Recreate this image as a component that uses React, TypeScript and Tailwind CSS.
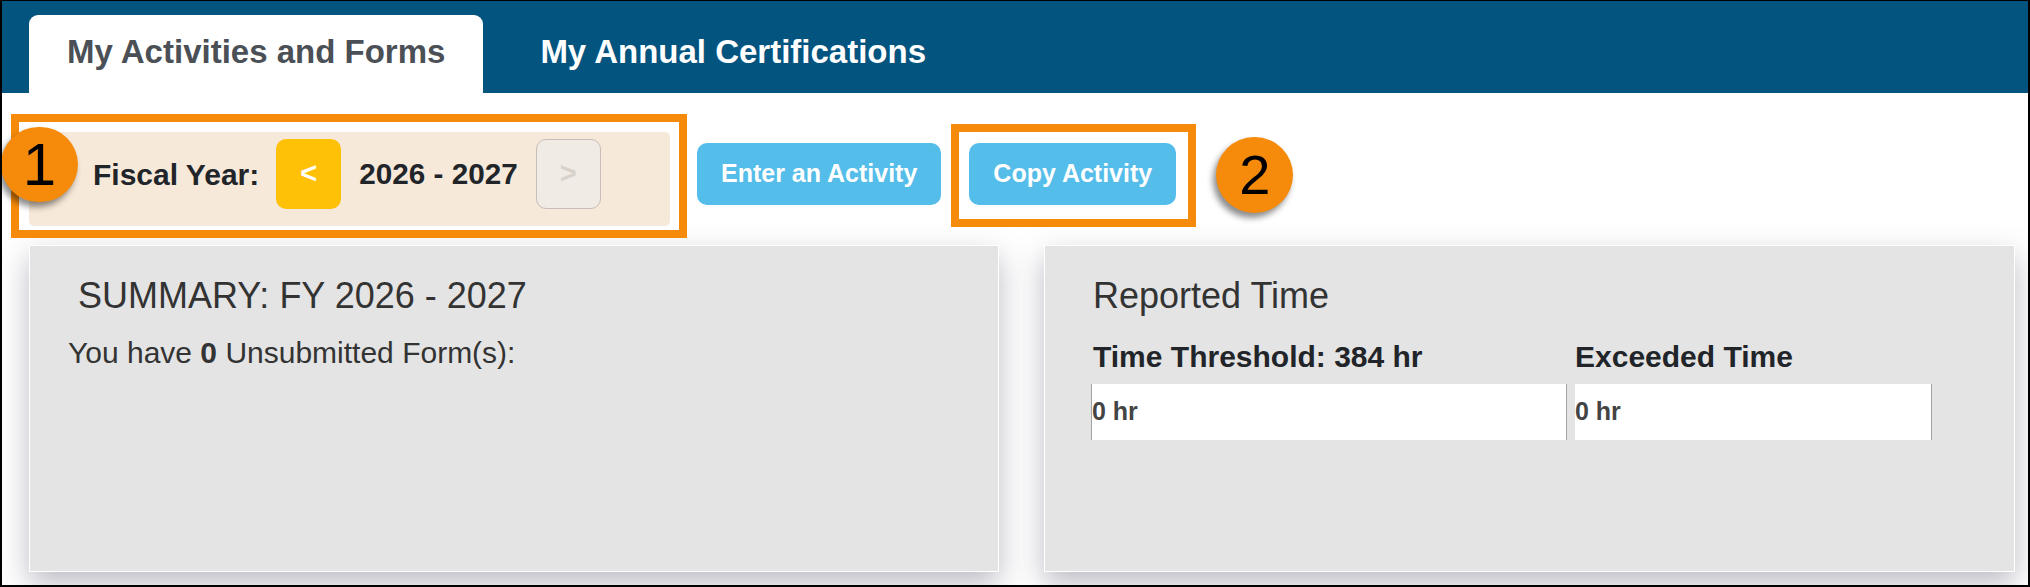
export default function App() {
  return (
    <div className="w-[2030px] h-[587px] overflow-hidden border-2 border-t border-black bg-white font-['Liberation_Sans',Arial,sans-serif]">
      {/* Tabs */}
      <div className="h-[92px] bg-[#03547f] flex items-end gap-[19px] pl-[27px]">
        <div className="h-[78px] px-[38px] pt-[21px] bg-white rounded-t-[9px] text-[33px] leading-[32px] font-bold text-[#4b4f56] whitespace-nowrap">
          My Activities and Forms
        </div>
        <div className="h-[78px] px-[38px] pt-[21px] text-[33px] leading-[32px] font-bold text-white whitespace-nowrap">
          My Annual Certifications
        </div>
      </div>

      {/* Toolbar */}
      <div className="mt-[21px] pl-[9px] flex items-start">
        <div className="relative w-[676px] h-[124px] border-[8px] border-[#f68b0b] pt-[10px] pl-[10px]">
          <div className="w-[641px] h-[94px] rounded-[5px] bg-[#f7e9d9] flex items-center pl-[64px] pb-[10px]">
            <span className="text-[30px] font-bold text-[#212529] whitespace-nowrap">Fiscal Year:</span>
            <button className="ml-[17px] w-[65px] h-[70px] rounded-[10px] bg-[#ffc107] text-white text-[29px] font-bold flex items-center justify-center">
              &lt;
            </button>
            <span className="ml-[18px] text-[29.7px] font-bold text-[#212529] whitespace-nowrap">2026 - 2027</span>
            <button className="ml-[18px] w-[65px] h-[70px] rounded-[10px] bg-[#f0ebe5] border border-[#c7bfb7] text-[#d8d2cb] text-[29px] font-bold flex items-center justify-center">
              &gt;
            </button>
          </div>
          <div className="absolute left-[-18px] top-[5px] w-[77px] h-[75px] rounded-full bg-[#f68b0b] shadow-[-3px_5px_6px_rgba(0,0,0,0.45)] flex items-center justify-center text-[60px] leading-none text-black">
            1
          </div>
        </div>

        <button className="ml-[10px] mt-[29px] h-[62px] px-[24px] rounded-[10px] bg-[#55bde9] text-white text-[25px] font-bold whitespace-nowrap">
          Enter an Activity
        </button>

        <div className="relative ml-[28px] mt-[29px]">
          <button className="h-[62px] px-[24px] rounded-[10px] bg-[#55bde9] text-white text-[25px] font-bold whitespace-nowrap">
            Copy Activity
          </button>
          <div className="absolute left-[-18px] top-[-19px] right-[-20px] bottom-[-22px] border-[8px] border-[#f68b0b]" />
          <div className="absolute left-[247px] top-[-6px] w-[77px] h-[76px] rounded-full bg-[#f68b0b] shadow-[-3px_5px_6px_rgba(0,0,0,0.45)] flex items-center justify-center text-[56px] leading-none text-black">
            2
          </div>
        </div>
      </div>

      {/* Cards */}
      <div className="mt-[7px] pl-[27px] flex gap-[45px]">
        <div className="w-[970px] h-[327px] bg-[#e4e4e4] border border-white shadow-[0_12px_28px_rgba(60,60,90,0.35)] pl-[38px] pt-[30px]">
          <div className="pl-[10px] text-[36px] leading-[40px] text-[#333]">SUMMARY: FY 2026 - 2027</div>
          <div className="mt-[20px] text-[30px] leading-[33px] text-[#333]">
            You have <b>0</b> Unsubmitted Form(s):
          </div>
        </div>

        <div className="w-[971px] h-[327px] bg-[#e4e4e4] border border-white shadow-[0_12px_28px_rgba(60,60,90,0.35)] pl-[46px] pt-[30px]">
          <div className="pl-[2px] text-[36px] leading-[40px] text-[#333]">Reported Time</div>
          <div className="mt-[24px] grid grid-cols-[476px_357px] gap-x-[8px]">
            <div className="pl-[2px] text-[30px] leading-[33px] font-bold text-[#212529] whitespace-nowrap">
              Time Threshold: 384 hr
            </div>
            <div className="text-[30px] leading-[33px] font-bold text-[#212529] whitespace-nowrap">Exceeded Time</div>
            <div className="mt-[11px] h-[56px] bg-white border-x border-[#a3a3a3] flex items-center text-[25px] font-bold text-[#444]">
              0 hr
            </div>
            <div className="mt-[11px] h-[56px] bg-white border-r border-[#a3a3a3] flex items-center text-[25px] font-bold text-[#444]">
              0 hr
            </div>
          </div>
        </div>
      </div>
    </div>
  );
}
